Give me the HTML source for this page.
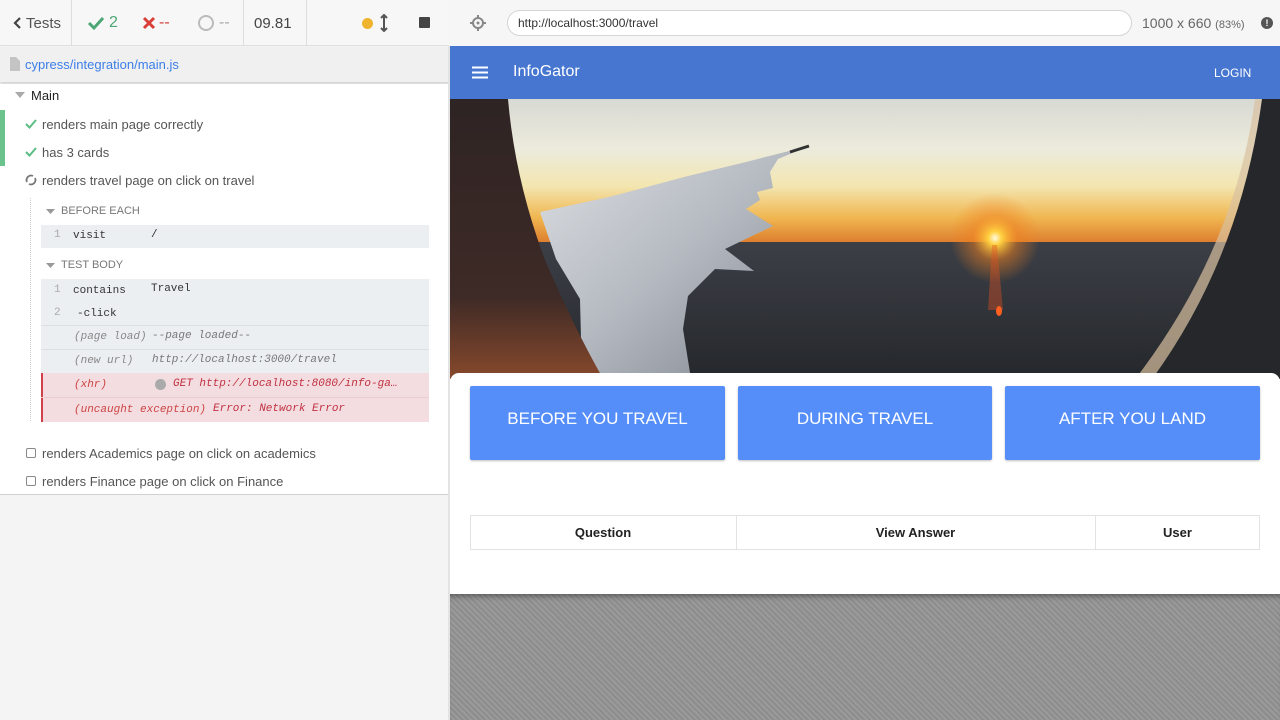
<!DOCTYPE html>
<html><head><meta charset="utf-8"><style>
*{margin:0;padding:0;box-sizing:border-box}
body{width:1280px;height:720px;overflow:hidden;position:relative;font-family:"Liberation Sans",sans-serif;background:#f4f4f4}
.a{position:absolute}
.t{font-size:13px;color:#555;white-space:nowrap}
.m{font-family:"Liberation Mono",monospace;font-size:11px;white-space:nowrap}
.i{font-style:italic}
</style></head><body>
<!-- left panel -->
<div class="a" style="left:0;top:0;width:449px;height:46px;background:#f7f7f7;border-bottom:1px solid #e0e0e0"></div>
<div class="a" style="left:71px;top:0;width:1px;height:46px;background:#ddd"></div>
<div class="a" style="left:243px;top:0;width:1px;height:46px;background:#ddd"></div>
<div class="a" style="left:306px;top:0;width:1px;height:46px;background:#ddd"></div>
<svg class="a" style="left:12px;top:16px" width="10" height="14"><path d="M8 2 L3 7 L8 12" stroke="#444" stroke-width="2.2" fill="none"/></svg>
<div class="a t" style="left:26px;top:15px;font-size:15px;color:#555">Tests</div>
<svg class="a" style="left:87px;top:15px" width="18" height="16"><path d="M2 8 L7 13 L16 3" stroke="#4ca675" stroke-width="3" fill="none"/></svg>
<div class="a t" style="left:109px;top:14px;font-size:16px;color:#4ca675">2</div>
<svg class="a" style="left:142px;top:16px" width="14" height="14"><path d="M2 2 L12 12 M12 2 L2 12" stroke="#d9403a" stroke-width="3"/></svg>
<div class="a t" style="left:159px;top:14px;font-size:16px;color:#d9403a">--</div>
<div class="a" style="left:198px;top:15px;width:16px;height:16px;border:2px solid #bbb;border-radius:50%"></div>
<div class="a t" style="left:219px;top:14px;font-size:16px;color:#aaa">--</div>
<div class="a t" style="left:254px;top:15px;font-size:15px;color:#444">09.81</div>
<div class="a" style="left:362px;top:18px;width:11px;height:11px;border-radius:50%;background:#efb42e"></div>
<svg class="a" style="left:380px;top:14px" width="8" height="18"><path d="M4 1 V17 M1 4 L4 1 L7 4 M1 14 L4 17 L7 14" stroke="#555" stroke-width="2" fill="none"/></svg>
<div class="a" style="left:419px;top:17px;width:11px;height:11px;background:#444;border-radius:1px"></div>
<div class="a" style="left:0;top:47px;width:449px;height:35px;background:#f0f0f0;box-shadow:0 2px 3px rgba(0,0,0,.15)"></div>
<svg class="a" style="left:10px;top:57px" width="10" height="14"><path d="M0 0 H6 L10 4 V14 H0 Z" fill="#c4c4c4"/></svg>
<div class="a t" style="left:25px;top:57px;color:#3b7ee8">cypress/integration/main.js</div>
<div class="a" style="left:0;top:84px;width:449px;height:411px;background:#fff;border-bottom:1px solid #d0d0d0"></div>
<div class="a" style="left:448px;top:46px;width:2px;height:674px;background:#e3e3e3"></div>
<svg class="a" style="left:15px;top:92px" width="10" height="6"><path d="M0 0 H10 L5 6 Z" fill="#aaa"/></svg>
<div class="a t" style="left:31px;top:88px;color:#222">Main</div>
<div class="a" style="left:0;top:110px;width:5px;height:56px;background:#6ac28d"></div>
<svg class="a" style="left:25px;top:119px" width="12" height="10"><path d="M1 5 L4.5 8.5 L11 1" stroke="#5bbd83" stroke-width="2" fill="none"/></svg>
<div class="a t" style="left:42px;top:117px">renders main page correctly</div>
<svg class="a" style="left:25px;top:147px" width="12" height="10"><path d="M1 5 L4.5 8.5 L11 1" stroke="#5bbd83" stroke-width="2" fill="none"/></svg>
<div class="a t" style="left:42px;top:145px">has 3 cards</div>
<svg class="a" style="left:25px;top:174px" width="12" height="12"><path d="M2 8 A4.5 4.5 0 0 1 8 2 M10 4 A4.5 4.5 0 0 1 4 10" stroke="#777" stroke-width="1.8" fill="none"/></svg>
<div class="a t" style="left:42px;top:173px">renders travel page on click on travel</div>
<div class="a" style="left:30px;top:198px;width:0;height:223px;border-left:1px dotted #ccc"></div>
<svg class="a" style="left:46px;top:209px" width="9" height="5"><path d="M0 0 H9 L4.5 5 Z" fill="#999"/></svg>
<div class="a t" style="left:61px;top:205px;font-size:11px;color:#777">BEFORE EACH</div>
<div class="a" style="left:41px;top:225px;width:388px;height:23px;background:#eceff2"></div>
<div class="a m" style="left:54px;top:229px;color:#aaa">1</div>
<div class="a m" style="left:73px;top:230px;color:#333">visit</div>
<div class="a m" style="left:151px;top:229px;color:#333">/</div>
<svg class="a" style="left:46px;top:263px" width="9" height="5"><path d="M0 0 H9 L4.5 5 Z" fill="#999"/></svg>
<div class="a t" style="left:61px;top:259px;font-size:11px;color:#777">TEST BODY</div>
<div class="a" style="left:41px;top:279px;width:388px;height:143px;background:#eceff2"></div>
<div class="a" style="left:41px;top:325px;width:388px;height:1px;background:#dde0e3"></div>
<div class="a" style="left:41px;top:349px;width:388px;height:1px;background:#dde0e3"></div>
<div class="a" style="left:41px;top:373px;width:388px;height:49px;background:#f4dde0;border-left:2px solid #d0424a"></div>
<div class="a" style="left:41px;top:397px;width:388px;height:1px;background:#ebcdd1"></div>
<div class="a m" style="left:54px;top:284px;color:#aaa">1</div>
<div class="a m" style="left:73px;top:285px;color:#333">contains</div>
<div class="a m" style="left:151px;top:283px;color:#333">Travel</div>
<div class="a m" style="left:54px;top:307px;color:#aaa">2</div>
<div class="a m" style="left:77px;top:308px;color:#333">-click</div>
<div class="a m i" style="left:74px;top:331px;color:#888">(page load)</div>
<div class="a m i" style="left:152px;top:330px;color:#777">--page loaded--</div>
<div class="a m i" style="left:74px;top:355px;color:#888">(new url)</div>
<div class="a m i" style="left:152px;top:354px;color:#777">http://localhost:3000/travel</div>
<div class="a m i" style="left:74px;top:379px;color:#c44">(xhr)</div>
<div class="a" style="left:155px;top:379px;width:11px;height:11px;border-radius:50%;background:#aaa"></div>
<div class="a m i" style="left:173px;top:378px;color:#c03040">GET http://localhost:8080/info-ga…</div>
<div class="a m i" style="left:74px;top:404px;color:#c44">(uncaught exception)</div>
<div class="a m i" style="left:213px;top:403px;color:#c03040">Error: Network Error</div>
<div class="a" style="left:26px;top:448px;width:10px;height:10px;border:1px solid #888;border-radius:2px"></div>
<div class="a t" style="left:42px;top:446px">renders Academics page on click on academics</div>
<div class="a" style="left:26px;top:476px;width:10px;height:10px;border:1px solid #888;border-radius:2px"></div>
<div class="a t" style="left:42px;top:474px">renders Finance page on click on Finance</div>

<!-- right top bar -->
<div class="a" style="left:450px;top:0;width:830px;height:46px;background:#f6f6f6"></div>
<svg class="a" style="left:470px;top:15px" width="16" height="16"><circle cx="8" cy="8" r="5" stroke="#888" stroke-width="2" fill="none"/><circle cx="8" cy="8" r="1.5" fill="#888"/><path d="M8 0V3M8 13V16M0 8H3M13 8H16" stroke="#888" stroke-width="2"/></svg>
<div class="a" style="left:507px;top:10px;width:625px;height:26px;background:#fff;border:1px solid #d5d5d5;border-radius:13px"></div>
<div class="a t" style="left:518px;top:16px;font-size:12px;color:#333">http://localhost:3000/travel</div>
<div class="a t" style="left:1142px;top:15px;font-size:14px;color:#666">1000 x 660 <span style="font-size:11px">(83%)</span></div>
<div class="a" style="left:1261px;top:17px;width:12px;height:12px;border-radius:50%;background:#555;color:#fff;font-size:9px;text-align:center;line-height:12px;font-weight:bold">!</div>

<!-- AUT -->
<div class="a" style="left:450px;top:46px;width:830px;height:53px;background:#4676d0"></div>
<svg class="a" style="left:472px;top:66px" width="16" height="13"><path d="M0 1.5H16M0 6.5H16M0 11.5H16" stroke="#fff" stroke-width="2"/></svg>
<div class="a" style="left:513px;top:63px;font-size:16px;color:#fff">InfoGator</div>
<div class="a" style="left:1214px;top:66px;font-size:12px;color:#fff">LOGIN</div>

<svg class="a" style="left:450px;top:99px" width="830" height="280" viewBox="450 99 830 280">
<defs>
<linearGradient id="sky" x1="0" y1="0" x2="0" y2="1"><stop offset="0" stop-color="#d8d9d3"/><stop offset=".35" stop-color="#ecebdc"/><stop offset=".6" stop-color="#f3e6b0"/><stop offset=".82" stop-color="#f0b650"/><stop offset="1" stop-color="#dc7a2c"/></linearGradient>
<linearGradient id="gr" x1="0" y1="0" x2="0" y2="1"><stop offset="0" stop-color="#3c3f46"/><stop offset="1" stop-color="#24272b"/></linearGradient>
<linearGradient id="lf" x1="0" y1="0" x2="0" y2="1"><stop offset="0" stop-color="#2e2424"/><stop offset=".7" stop-color="#3e2a26"/><stop offset="1" stop-color="#8a4a2c"/></linearGradient>
<linearGradient id="wg" x1="0" y1="0" x2="1" y2="1"><stop offset="0" stop-color="#dcdfe3"/><stop offset=".5" stop-color="#b4b9c0"/><stop offset="1" stop-color="#7e838b"/></linearGradient>
<radialGradient id="sun" cx="995" cy="238" r="45" gradientUnits="userSpaceOnUse"><stop offset="0" stop-color="#fffbe0"/><stop offset=".15" stop-color="#ffd040"/><stop offset=".5" stop-color="#f08020" stop-opacity=".5"/><stop offset="1" stop-color="#f08020" stop-opacity="0"/></radialGradient>
</defs>
<rect x="450" y="99" width="830" height="145" fill="url(#sky)"/>
<rect x="450" y="242" width="830" height="140" fill="url(#gr)"/>
<circle cx="995" cy="238" r="45" fill="url(#sun)"/>
<path d="M992 245 L997 245 L1003 310 L988 310Z" fill="#e05020" opacity=".4"/>
<ellipse cx="999" cy="311" rx="3" ry="5" fill="#ff6020"/>
<path d="M809 146 L778 159 L770 172 L773 188 L757 192 L760 200 L746 209 L773 226 L752 236 L725 249 L754 271 L715 269 L688 296 L683 329 L691 379 L582 379 L580 299 L556 259 L540 212 L609 197 L688 176 L746 162 Z" fill="url(#wg)"/>
<path d="M790 152 L809 146" stroke="#333" stroke-width="3"/>
<path d="M450 99 L508 99 Q515 180 545 260 Q575 330 605 382 L450 382Z" fill="url(#lf)"/>
<path d="M1255 99 Q1235 250 1133 382 L1150 382 Q1240 260 1262 99Z" fill="#d8c0a0" opacity=".7"/>
<path d="M1262 99 L1280 99 L1280 382 L1150 382 Q1240 260 1262 99Z" fill="#25272b"/>
</svg>

<!-- content card -->
<div class="a" style="left:450px;top:373px;width:830px;height:221px;background:#fff;border-radius:9px 9px 0 0"></div>
<div class="a" style="left:450px;top:594px;width:830px;height:126px;background:repeating-linear-gradient(45deg,#8d8d8d 0 2px,#9a9a9a 2px 4px);box-shadow:inset 0 6px 6px -4px rgba(0,0,0,.4)"></div>
<div class="a" style="left:470px;top:386px;width:255px;height:74px;background:#558ef8;border-radius:2px;box-shadow:0 1px 2px rgba(0,0,0,.25);color:#fff;font-size:17px;text-align:center;padding-top:23px">BEFORE YOU TRAVEL</div>
<div class="a" style="left:738px;top:386px;width:254px;height:74px;background:#558ef8;border-radius:2px;box-shadow:0 1px 2px rgba(0,0,0,.25);color:#fff;font-size:17px;text-align:center;padding-top:23px">DURING TRAVEL</div>
<div class="a" style="left:1005px;top:386px;width:255px;height:74px;background:#558ef8;border-radius:2px;box-shadow:0 1px 2px rgba(0,0,0,.25);color:#fff;font-size:17px;text-align:center;padding-top:23px">AFTER YOU LAND</div>
<div class="a" style="left:470px;top:515px;width:790px;height:35px;border:1px solid #e3e3e3"></div>
<div class="a" style="left:736px;top:515px;width:1px;height:35px;background:#e3e3e3"></div>
<div class="a" style="left:1095px;top:515px;width:1px;height:35px;background:#e3e3e3"></div>
<div class="a" style="left:470px;top:525px;width:266px;text-align:center;font-size:13px;font-weight:bold;color:#222">Question</div>
<div class="a" style="left:736px;top:525px;width:359px;text-align:center;font-size:13px;font-weight:bold;color:#222">View Answer</div>
<div class="a" style="left:1095px;top:525px;width:165px;text-align:center;font-size:13px;font-weight:bold;color:#222">User</div>
</body></html>
